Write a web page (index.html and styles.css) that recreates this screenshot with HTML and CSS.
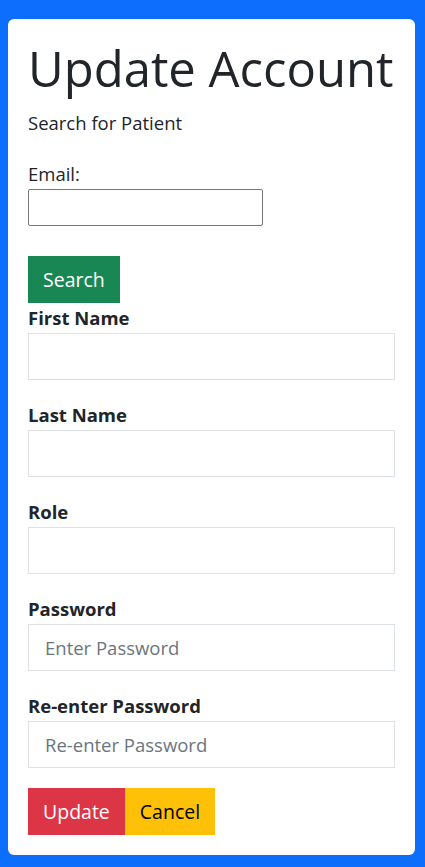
FILE: index.html
```html
<!DOCTYPE html>
<html lang="en">
<head>
<meta charset="utf-8">
<title>Update Account</title>
<link rel="stylesheet" href="styles.css">
</head>
<body>
<main class="card">
  <h1 class="title">Update Account</h1>
  <p class="subtitle">Search for Patient</p>
  <form class="search">
    <label class="plain-label" for="email">Email:</label>
    <input class="plain-input" id="email" type="text">
    <button class="btn btn-green" type="button">Search</button>
  </form>
  <form class="account">
    <div class="group">
      <label class="field-label" for="first">First Name</label>
      <input class="field" id="first" type="text">
    </div>
    <div class="group">
      <label class="field-label" for="last">Last Name</label>
      <input class="field" id="last" type="text">
    </div>
    <div class="group">
      <label class="field-label" for="role">Role</label>
      <input class="field" id="role" type="text">
    </div>
    <div class="group">
      <label class="field-label" for="pw">Password</label>
      <input class="field" id="pw" type="password" placeholder="Enter Password">
    </div>
    <div class="group">
      <label class="field-label" for="pw2">Re-enter Password</label>
      <input class="field" id="pw2" type="password" placeholder="Re-enter Password">
    </div>
    <div class="actions">
      <button class="btn btn-red" type="button">Update</button>
      <button class="btn btn-yellow" type="button">Cancel</button>
    </div>
  </form>
</main>
</body>
</html>
```

FILE: styles.css
```css
* { box-sizing: border-box; }
html, body { margin: 0; }
body {
  background: #0d6efd;
  padding: 19px 10px 12px 8px;
  font-family: "Open Sans", "Noto Sans", sans-serif;
  color: #212529;
}
.card {
  background: #fff;
  border-radius: 6px;
  padding: 20px;
  display: flex;
  flex-direction: column;
}
.title {
  margin: 0 0 10px;
  font-size: 49px;
  line-height: 59px;
  font-weight: 500;
  white-space: nowrap;
}
.subtitle {
  margin: 0 0 20px;
  font-size: 18.5px;
  line-height: 30px;
}
.search {
  display: flex;
  flex-direction: column;
  align-items: flex-start;
}
.plain-label {
  font-size: 18.5px;
  line-height: 31px;
}
.plain-input {
  width: 235px;
  height: 37px;
  border: 1px solid #767676;
  border-radius: 2px;
  margin: 0 0 30px;
  font-size: 16px;
}
.btn {
  height: 47px;
  padding: 0 15px;
  border: 0;
  border-radius: 0;
  font-family: inherit;
  font-size: 19.5px;
  line-height: 47px;
}
.btn-green { background: #198754; color: #fff; }
.btn-red { background: #dc3545; color: #fff; }
.btn-yellow { background: #ffc107; color: #000; }
.account {
  display: flex;
  flex-direction: column;
}
.group {
  display: flex;
  flex-direction: column;
  margin-bottom: 20px;
}
.field-label {
  font-size: 18.5px;
  font-weight: 700;
  line-height: 30px;
}
.field {
  height: 47px;
  border: 1px solid #dee2e6;
  border-radius: 0;
  padding: 0 16px;
  font-family: inherit;
  font-size: 18.5px;
  color: #212529;
}
.field::placeholder { color: #6c757d; }
.actions { display: flex; }
```
